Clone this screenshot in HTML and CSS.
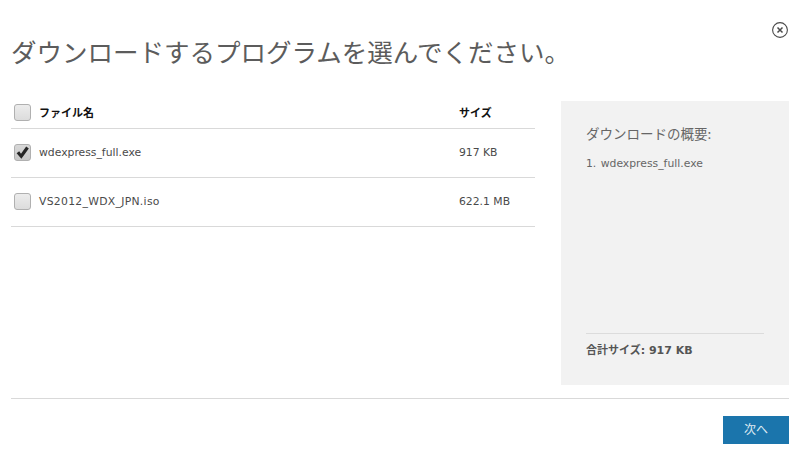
FILE: index.html
```html
<!DOCTYPE html>
<html lang="ja">
<head>
<meta charset="utf-8">
<title>ダウンロード</title>
<link rel="stylesheet" href="styles.css">
</head>
<body>
<div class="dialog">
  <header class="top">
    <button class="close" aria-label="閉じる">
      <svg width="18" height="18" viewBox="0 0 18 18" fill="none" stroke="#4a4a4a">
        <circle cx="9" cy="9" r="7.4" stroke-width="1.1"/>
        <path d="M6.5 6.5 11.5 11.5M11.5 6.5 6.5 11.5" stroke-width="1.5"/>
      </svg>
    </button>
  </header>
  <h1 class="title">ダウンロードするプログラムを選んでください。</h1>
  <main class="content">
    <section class="files">
      <div class="row head">
        <span class="check"></span>
        <span class="name">ファイル名</span>
        <span class="size">サイズ</span>
      </div>
      <div class="row">
        <span class="check on">
          <svg width="15" height="15" viewBox="0 0 15 15"><path d="M1.6 8.2 4.2 6.3 6 8.8 11.2 1.6 13.8 3.4 6.4 13.8Z" fill="#262626"/></svg>
        </span>
        <span class="name">wdexpress_full.exe</span>
        <span class="size">917 KB</span>
      </div>
      <div class="row">
        <span class="check"></span>
        <span class="name caps">VS2012_WDX_JPN.iso</span>
        <span class="size">622.1 MB</span>
      </div>
    </section>
    <aside class="summary">
      <h2 class="summary-title">ダウンロードの概要:</h2>
      <p class="summary-item">1. wdexpress_full.exe</p>
      <p class="summary-total">合計サイズ: 917 KB</p>
    </aside>
  </main>
  <footer class="bottom">
    <button class="next">次へ</button>
  </footer>
</div>
</body>
</html>
```
FILE: styles.css
```css
* { box-sizing: border-box; }
html, body { margin: 0; height: 100%; background: #fff; }
body {
  font-family: "DejaVu Sans", "Noto Sans CJK JP", sans-serif;
  color: #4d4d4d;
}
.dialog {
  width: 800px;
  height: 457px;
  padding: 21px 11px 0;
  display: flex;
  flex-direction: column;
}
.top { display: flex; justify-content: flex-end; height: 0; }
.close {
  border: 0;
  background: none;
  padding: 0;
  width: 18px;
  height: 18px;
  display: block;
}
.close svg { display: block; }
.title {
  margin: 12px 0 0;
  height: 68px;
  font: 400 25.5px/36px "Noto Sans CJK JP", sans-serif;
  color: #5c5c5c;
  white-space: nowrap;
}
.content { display: flex; justify-content: space-between; height: 284px; }
.files { width: 524px; margin-top: -5px; }
.row {
  display: flex;
  align-items: center;
  height: 49px;
  padding-bottom: 2px;
  border-bottom: 1px solid #d9d9d9;
  font-size: 10.8px;
  color: #4a4a4a;
}
.row.head {
  height: 33px;
  padding-bottom: 0;
  font: 700 11px "Noto Sans CJK JP", sans-serif;
  color: #111;
}
.check {
  width: 17px;
  height: 17px;
  margin-left: 3px;
  background: linear-gradient(#ececec, #dcdcdc);
  border: 1px solid #b0b0b0;
  border-radius: 3px;
  flex: none;
  display: flex;
  align-items: center;
  justify-content: center;
}
.check.on { background: linear-gradient(#d8d8d8, #c8c8c8); }
.name { margin-left: 8px; width: 420px; }
.name.caps { letter-spacing: 0.3px; }
.size { white-space: nowrap; }
.summary {
  width: 228px;
  background: #f2f2f2;
  padding: 22px 25px 0;
  display: flex;
  flex-direction: column;
}
.summary-title {
  margin: 0;
  font: 400 13.5px/20px "Noto Sans CJK JP", sans-serif;
  color: #666;
}
.summary-item { margin: 14px 0 0; font-size: 10.8px; color: #666; word-spacing: 1px; }
.summary-total {
  margin: auto 0 26px;
  border-top: 1px solid #dcdcdc;
  padding-top: 9px;
  font: 700 11px/16px "DejaVu Sans", "Noto Sans CJK JP", sans-serif;
  color: #555;
}
.bottom {
  margin-top: 13px;
  border-top: 1px solid #d9d9d9;
  padding-top: 17px;
  display: flex;
  justify-content: flex-end;
}
.next {
  width: 66px;
  height: 28px;
  border: 0;
  background: #1b75ac;
  color: #dfeaf2;
  font: 400 12px "Noto Sans CJK JP", sans-serif;
  padding: 0 0 3px;
}
```
